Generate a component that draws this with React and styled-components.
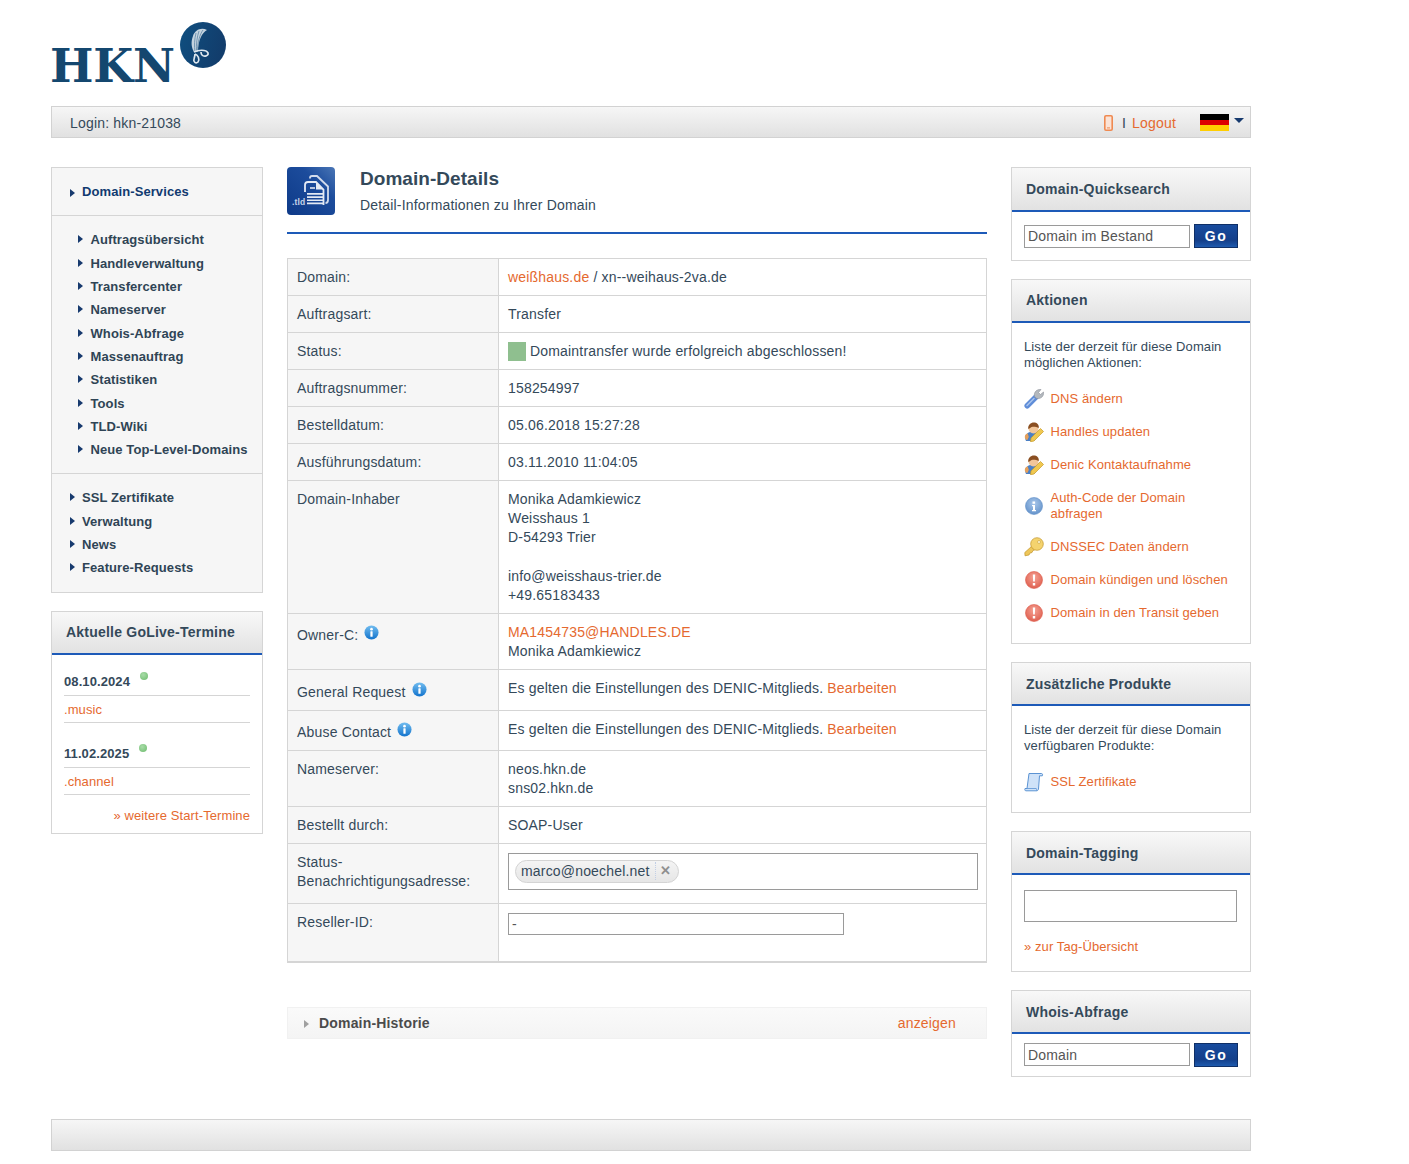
import React from 'react';
import styled, { createGlobalStyle } from 'styled-components';

const GlobalStyle = createGlobalStyle`
  html, body {
    margin: 0;
    padding: 0;
    background: #ffffff;
    font-family: "Liberation Sans", Arial, sans-serif;
    font-size: 14px;
    letter-spacing: 0.18px;
    color: #34495a;
  }
  * { box-sizing: border-box; }
`;

const Page = styled.div`
  width: 1200px;
  margin-left: 51px;
  padding-bottom: 13px;
`;

const LogoRow = styled.header`
  height: 106px;
  display: flex;
  align-items: flex-start;
  gap: 7px;
  padding-top: 22px;
`;

const LogoText = styled.div`
  width: 123px;
  margin: 18px 0 0 -1px;
  font-family: "DejaVu Serif", "Liberation Serif", serif;
  font-weight: 700;
  font-size: 46px;
  line-height: 52px;
  letter-spacing: -0.2px;
  white-space: nowrap;
  color: #14476f;
`;

const GreyBar = styled.div`
  height: 32px;
  border: 1px solid #d2d2d2;
  background: linear-gradient(#f6f6f6, #e1e1e1);
`;

const TopBar = styled(GreyBar)`
  display: flex;
  align-items: center;
  padding: 1px 6px 0 18px;
  line-height: 30px;
`;

const Spacer = styled.div`
  flex: 1;
`;

const Separator = styled.span`
  margin: 0 6px 0 9px;
`;

const A = styled.a`
  color: #e5692f;
  text-decoration: none;
  cursor: pointer;
`;

const FlagWrap = styled.div`
  display: flex;
  align-items: flex-start;
  gap: 5px;
  margin: -1px 0 0 24px;
`;

const Flag = styled.div`
  width: 29px;
  height: 17px;
  background: linear-gradient(#000 0 33.3%, #dd0000 33.3% 66.6%, #ffce00 66.6%);
`;

const Caret = styled.div`
  margin-top: 4px;
  border-left: 5px solid transparent;
  border-right: 5px solid transparent;
  border-top: 5px solid #173a6e;
`;

const Columns = styled.div`
  display: grid;
  grid-template-columns: 212px 700px 240px;
  column-gap: 24px;
  margin-top: 29px;
  align-items: start;
`;

const Stack = styled.aside`
  display: flex;
  flex-direction: column;
  gap: 18px;
`;

const NavBox = styled.nav`
  border: 1px solid #d5d5d5;
  background: #f6f6f6;
`;

const NavSection = styled.ul`
  list-style: none;
  margin: 0;
  padding: ${p => p.$pad || '0'};
  border-bottom: ${p => (p.$last ? 'none' : '1px solid #d5d5d5')};
`;

const NavItem = styled.li`
  position: relative;
  height: ${p => p.$h || '23.33px'};
  line-height: 23px;
  padding-left: ${p => (p.$deep ? '38.5px' : '30px')};
  font-size: 13px;
  letter-spacing: 0.09px;
  font-weight: 700;
  color: ${p => (p.$head ? '#113a70' : '#2f4455')};
  &::before {
    content: '';
    position: absolute;
    left: ${p => (p.$deep ? '26px' : '18px')};
    top: ${p => (p.$head ? '9px' : '7px')};
    border-top: 4px solid transparent;
    border-bottom: 4px solid transparent;
    border-left: 5px solid #173a6e;
  }
`;

const Box = styled.section`
  border: 1px solid #d5d5d5;
  background: #fff;
`;

const BoxHead = styled.h3`
  margin: 0;
  height: ${p => (p.$tall ? '44px' : '43px')};
  padding-left: 14px;
  font-size: 14px;
  letter-spacing: 0.22px;
  line-height: ${p => (p.$tall || p.$low ? '43px' : '41px')};
  font-weight: 700;
  color: #34495a;
  background: linear-gradient(#f8f8f8, #e2e2e2);
  border-bottom: 2px solid #1d5ab8;
`;

const GoLiveBody = styled.div`
  padding: 14px 12px 8px;
  font-size: 13px;
  letter-spacing: 0.09px;
`;

const DateRow = styled.div`
  display: flex;
  align-items: flex-start;
  gap: 10px;
  height: 27px;
  line-height: 25px;
  font-weight: 700;
  margin-top: ${p => (p.$second ? '18px' : '0')};
  border-bottom: 1px solid #d5d5d5;
`;

const Dot = styled.span`
  width: 8px;
  height: 8px;
  margin-top: 3px;
  border-radius: 50%;
  background: radial-gradient(circle at 40% 35%, #a8dca8, #6dbb6d);
`;

const TldRow = styled.div`
  height: 27px;
  line-height: 27px;
  border-bottom: 1px solid #d5d5d5;
`;

const MoreLink = styled(A)`
  display: block;
  text-align: right;
  margin-top: 12px;
  line-height: 18px;
`;

const Main = styled.main`
  min-width: 0;
`;

const TitleRow = styled.div`
  display: flex;
  gap: 25px;
  height: 67px;
  border-bottom: 2px solid #1d5ab8;
`;

const Tile = styled.div`
  width: 48px;
  height: 48px;
`;

const Title = styled.h1`
  margin: 0;
  font-size: 19px;
  letter-spacing: 0.05px;
  line-height: 24px;
  font-weight: 700;
  color: #34495a;
`;

const SubTitle = styled.p`
  margin: 5px 0 0;
  line-height: 19px;
`;

const Table = styled.table`
  width: 700px;
  margin-top: 24px;
  border-collapse: collapse;
  table-layout: fixed;
  border-bottom: 2px solid #d5d5d5;
`;

const Row = styled.tr`
  height: ${p => p.$h}px;
`;

const Label = styled.td`
  width: 211px;
  padding: ${p => p.$top || 9}px 9px ${p => (p.$top ? 6 : 8)}px;
  vertical-align: top;
  line-height: 19px;
  background: #f6f6f6;
  border: 1px solid #d5d5d5;
`;

const Value = styled.td`
  padding: 9px 8px 7px 9px;
  vertical-align: top;
  line-height: 19.2px;
  border: 1px solid #d5d5d5;
`;

const StatusSquare = styled.span`
  display: inline-block;
  width: 18px;
  height: 19px;
  margin-right: 4px;
  vertical-align: top;
  background: #8fbf8f;
`;

const TagField = styled.div`
  height: 37px;
  padding: 6px;
  border: 1px solid #9a9a9a;
`;

const Chip = styled.div`
  display: inline-flex;
  align-items: center;
  height: 23px;
  padding: 0 7px 1px 5px;
  border: 1px solid #d4d4d4;
  border-radius: 12px;
  background: linear-gradient(#f4f4f4, #e6e6e6);
  line-height: 20px;
`;

const ChipClose = styled.span`
  margin-left: 5px;
  padding-left: 4px;
  border-left: 1px dotted #c2cfe6;
  font-size: 13px;
  font-weight: 700;
  line-height: 18px;
  color: #8f8f8f;
`;

const TextInput = styled.input`
  display: block;
  width: ${p => p.$w};
  height: ${p => p.$h || '23px'};
  padding: 0 3px;
  border: 1px solid #9a9a9a;
  border-radius: 0;
  background: #fff;
  outline: none;
  font-family: inherit;
  font-size: 14px;
  letter-spacing: 0.18px;
  color: #555;
`;

const HistoryBar = styled.div`
  display: flex;
  align-items: center;
  height: 32px;
  margin-top: 44px;
  padding: 0 30px 0 16px;
  border: 1px solid #f1f1f1;
  background: linear-gradient(#fafafa, #f4f4f4);
`;

const HistoryTitle = styled.strong`
  color: #4b4b4b;
  &::before {
    content: '';
    display: inline-block;
    margin-right: 10px;
    border-top: 4px solid transparent;
    border-bottom: 4px solid transparent;
    border-left: 5px solid #a0a0a0;
  }
`;

const SearchBody = styled.div`
  display: flex;
  align-items: center;
  gap: 4px;
  padding: ${p => p.$pad || '12px'};
`;

const GoButton = styled.button`
  width: 44px;
  height: 24px;
  padding: 0;
  border: 1px solid #0f2f66;
  background: linear-gradient(#184c9e, #143f8a 70%, #1e5aae);
  color: #fff;
  font-family: inherit;
  font-size: 14px;
  font-weight: 700;
  letter-spacing: 1.5px;
`;

const BoxBody = styled.div`
  padding: ${p => p.$pad};
  font-size: 13px;
  letter-spacing: 0.09px;
  line-height: 16px;
`;

const Intro = styled.p`
  margin: 0 0 11.5px;
`;

const ActionList = styled.ul`
  list-style: none;
  margin: 0;
  padding: 0;
`;

const ActionItem = styled.li`
  display: flex;
  align-items: flex-start;
  gap: 6.5px;
  padding: 8.23px 0;
  line-height: 16.5px;
`;

const IconSlot = styled.span`
  flex: none;
  width: 20px;
  height: 16px;
  margin-top: ${p => p.$top || 0}px;
  & > svg {
    display: block;
    margin-top: -2px;
  }
`;

const TagInput = styled(TextInput)`
  height: 32px;
`;

const TagLink = styled(A)`
  display: block;
  margin-top: 17px;
`;

const Footer = styled(GreyBar)`
  margin-top: 42px;
`;

const InfoBubble = styled.svg`
  width: 15px;
  height: 15px;
  margin-left: 6px;
`;

const InfoIcon = () => (
  <InfoBubble viewBox="0 0 16 16">
    <defs>
      <linearGradient id="infoBlue" x1="0" y1="0" x2="0" y2="1">
        <stop offset="0" stopColor="#72bdf0" />
        <stop offset="1" stopColor="#1273cc" />
      </linearGradient>
    </defs>
    <circle cx="8" cy="8" r="7.5" fill="url(#infoBlue)" />
    <circle cx="8" cy="4.4" r="1.4" fill="#fff" />
    <rect x="6.8" y="6.6" width="2.4" height="6" rx="0.6" fill="#fff" />
  </InfoBubble>
);

const LogoMark = () => (
  <svg width="46" height="46" viewBox="0 0 46 46">
    <defs>
      <linearGradient id="logoBlue" x1="0" y1="0" x2="1" y2="0.3">
        <stop offset="0" stopColor="#0f4f80" />
        <stop offset="1" stopColor="#123d6c" />
      </linearGradient>
    </defs>
    <circle cx="23" cy="23" r="23" fill="url(#logoBlue)" />
    <path d="M13 14C15 8 21 5 27 8 22 11 18 18 18 30L14 30C11 25 11 19 13 14z" fill="#c4d3df" />
    <path d="M16 11C14.500 17 14 24 15 30M19 9C17 15 16 22 16.500 30M23 8C20 12 17.500 20 17.500 30" fill="none" stroke="#5f86a6" strokeWidth="0.800" />
    <path d="M14 30c4-2 12-3 14 1 1 3-4 4-6 2-1-1-1-2-1-3M15 32c3 1 5 5 3 8-2 2-5 0-4-3 .4-2 1-3 1-5" fill="none" stroke="#dfe8ef" strokeWidth="1.700" />
  </svg>
);

const PhoneIcon = () => (
  <svg width="9" height="16" viewBox="0 0 9 16">
    <rect x="0.8" y="0.8" width="7.4" height="14.4" rx="1.2" fill="#fbe3d6" stroke="#ef8a52" strokeWidth="1.6" />
    <rect x="3" y="12.4" width="3" height="1" fill="#ef8a52" />
  </svg>
);

const TileIcon = () => (
  <svg width="48" height="48" viewBox="0 0 48 48">
    <defs>
      <linearGradient id="tileBlue" x1="1" y1="0" x2="0" y2="1">
        <stop offset="0" stopColor="#4a76b6" />
        <stop offset="0.35" stopColor="#1c4c9c" />
        <stop offset="1" stopColor="#0e3a88" />
      </linearGradient>
    </defs>
    <rect width="48" height="48" rx="4" fill="url(#tileBlue)" />
    <path d="M23 11.500v-.500c0-1.200 1-2 2-2h5l11 10.500V33c0 1.500-1 3-2.500 3" fill="none" stroke="#d3dcec" strokeWidth="1.800" />
    <path d="M18 25v-7c0-2 1-3 3-3h8l7.500 7.500V38" fill="none" stroke="#e4eaf4" strokeWidth="1.800" />
    <path d="M29 15v7.500h7.500z" fill="#e4eaf4" />
    <path d="M23 20h5v2h-5z" fill="#b9c6de" />
    <path d="M20 26h16v1.700H20zM20 29.200h16v1.700H20zM20 32.400h16v1.700H20zM20 35.600h16v1.700H20z" fill="#e4eaf4" />
    <text x="5" y="38" fontFamily="Liberation Sans" fontWeight="700" fontSize="8.500" fill="#c8d4e8">.tld</text>
  </svg>
);

const WrenchIcon = () => (
  <svg width="20" height="20" viewBox="0 0 20 20">
    <path d="M3.200 16.800l8.500-8.500" stroke="#5f8dd8" strokeWidth="5.500" strokeLinecap="round" />
    <path d="M3 16.500l7-7" stroke="#a8c4ee" strokeWidth="1.500" strokeLinecap="round" />
    <path d="M10.500 7.500C9.500 3 13 0 17 .5L14.500 3.500 16.500 5.500 19.500 3C20.200 7 17 10.200 12.800 9.500z" fill="#b4b9be" stroke="#8b9198" strokeWidth="0.600" />
  </svg>
);

const UserIcon = () => (
  <svg width="20" height="20" viewBox="0 0 20 20">
    <path d="M2 19c-2-4 0-8 4-9h6l2 4-4 5z" fill="#4c80c4" />
    <path d="M.8 15c0-2 1.500-3.500 3-3.500l1 3.500-1.500 3c-1.500 0-2.500-1.500-2.500-3z" fill="#e6a05a" />
    <circle cx="9.500" cy="6.500" r="5" fill="#f2c69a" />
    <path d="M4.300 7c-.6-4 2.500-6.500 5.500-6.500s5.500 2 5 5.500c-2-1-5.500-1.500-7-1-1 .3-2 1.500-3.500 2z" fill="#8a4f22" />
    <path d="M7 16l9.500-9.500 3 3L10 19l-3.500.8z" fill="#f0c850" stroke="#c69a2a" strokeWidth="0.700" />
  </svg>
);

const RoundIcon = ({ id, from, to, glyph }) => (
  <svg width="20" height="20" viewBox="0 0 20 20">
    <defs>
      <radialGradient id={id} cx="0.5" cy="0.35" r="0.7">
        <stop offset="0" stopColor={from} />
        <stop offset="1" stopColor={to} />
      </radialGradient>
    </defs>
    <circle cx="10" cy="10" r="8.500" fill={`url(#${id})`} stroke={to} strokeWidth="0.600" />
    {glyph === 'info' ? (
      <path d="M8.500 5.500h2.600v2.200H8.500zM8 9h3v5h1v1.200H8V14h1v-3.800H8z" fill="#fff" />
    ) : (
      <path d="M8.800 4.500h2.400l-.4 7H9.200zM8.800 13h2.400v2.400H8.800z" fill="#fff" />
    )}
  </svg>
);

const KeyIcon = () => (
  <svg width="20" height="20" viewBox="0 0 20 20">
    <path d="M.8 15.500L8 9l3.500 3.500-2.500 1-1 2-2 .5-1 2-4 .8z" fill="#eec65a" stroke="#c2952b" strokeWidth="0.700" />
    <circle cx="13" cy="7" r="6.300" fill="#f4d36e" stroke="#c2952b" strokeWidth="0.700" />
    <circle cx="15" cy="5" r="1.500" fill="#fff6d0" stroke="#c2952b" strokeWidth="0.500" />
  </svg>
);

const ScrollIcon = () => (
  <svg width="20" height="20" viewBox="0 0 20 20">
    <path d="M5 1.500h12.500c1 0 1.300 1 .8 2.300h-2.800L14.500 17c-.2 1.200-1 1.800-2 1.800H2c-1 0-1.500-.8-1-2.300h2z" fill="#cfe2f8" stroke="#5b93d3" strokeWidth="1" />
    <path d="M3 16.500h9c.6 0 .8.600.5 2.200" fill="none" stroke="#5b93d3" strokeWidth="0.800" />
  </svg>
);

const alert = <RoundIcon id="alertRed" from="#f5a294" to="#dd5a4a" glyph="alert" />;

const actions = [
  { icon: <WrenchIcon />, label: 'DNS ändern' },
  { icon: <UserIcon />, label: 'Handles updaten' },
  { icon: <UserIcon />, label: 'Denic Kontaktaufnahme' },
  { icon: <RoundIcon id="infoSlate" from="#a8c6ea" to="#5f8fc8" glyph="info" />, label: 'Auth-Code der Domain abfragen', top: 8 },
  { icon: <KeyIcon />, label: 'DNSSEC Daten ändern' },
  { icon: alert, label: 'Domain kündigen und löschen' },
  { icon: alert, label: 'Domain in den Transit geben' },
];

const services = [
  'Auftragsübersicht', 'Handleverwaltung', 'Transfercenter', 'Nameserver', 'Whois-Abfrage',
  'Massenauftrag', 'Statistiken', 'Tools', 'TLD-Wiki', 'Neue Top-Level-Domains',
];

const noop = () => {};

const App = () => (
  <Page>
    <GlobalStyle />
    <LogoRow>
      <LogoText>HKN</LogoText>
      <LogoMark />
    </LogoRow>

    <TopBar>
      <span>Login: hkn-21038</span>
      <Spacer />
      <PhoneIcon />
      <Separator>I</Separator>
      <A>Logout</A>
      <FlagWrap>
        <Flag />
        <Caret />
      </FlagWrap>
    </TopBar>

    <Columns>
      <Stack>
        <NavBox>
          <NavSection $pad="12px 0 11px">
            <NavItem $head $h="24px">Domain-Services</NavItem>
          </NavSection>
          <NavSection $pad="12.33px 0 11.67px">
            {services.map(s => <NavItem $deep key={s}>{s}</NavItem>)}
          </NavSection>
          <NavSection $pad="12px 0 12px" $last>
            {['SSL Zertifikate', 'Verwaltung', 'News', 'Feature-Requests'].map(s => (
              <NavItem key={s}>{s}</NavItem>
            ))}
          </NavSection>
        </NavBox>

        <Box>
          <BoxHead>Aktuelle GoLive-Termine</BoxHead>
          <GoLiveBody>
            <DateRow>08.10.2024 <Dot /></DateRow>
            <TldRow><A>.music</A></TldRow>
            <DateRow $second>11.02.2025 <Dot /></DateRow>
            <TldRow><A>.channel</A></TldRow>
            <MoreLink>» weitere Start-Termine</MoreLink>
          </GoLiveBody>
        </Box>
      </Stack>

      <Main>
        <TitleRow>
          <Tile><TileIcon /></Tile>
          <div>
            <Title>Domain-Details</Title>
            <SubTitle>Detail-Informationen zu Ihrer Domain</SubTitle>
          </div>
        </TitleRow>

        <Table>
          <tbody>
            <Row $h={37}><Label>Domain:</Label><Value><A>weißhaus.de</A> / xn--weihaus-2va.de</Value></Row>
            <Row $h={37}><Label>Auftragsart:</Label><Value>Transfer</Value></Row>
            <Row $h={37}><Label>Status:</Label><Value><StatusSquare />Domaintransfer wurde erfolgreich abgeschlossen!</Value></Row>
            <Row $h={37}><Label>Auftragsnummer:</Label><Value>158254997</Value></Row>
            <Row $h={37}><Label>Bestelldatum:</Label><Value>05.06.2018 15:27:28</Value></Row>
            <Row $h={37}><Label>Ausführungsdatum:</Label><Value>03.11.2010 11:04:05</Value></Row>
            <Row $h={133}>
              <Label>Domain-Inhaber</Label>
              <Value>
                Monika Adamkiewicz<br />Weisshaus 1<br />D-54293 Trier<br /><br />info@weisshaus-trier.de<br />+49.65183433
              </Value>
            </Row>
            <Row $h={56}>
              <Label $top={11}>Owner-C:<InfoIcon /></Label>
              <Value><A>MA1454735@HANDLES.DE</A><br />Monika Adamkiewicz</Value>
            </Row>
            <Row $h={41}>
              <Label $top={12}>General Request<InfoIcon /></Label>
              <Value>Es gelten die Einstellungen des DENIC-Mitglieds. <A>Bearbeiten</A></Value>
            </Row>
            <Row $h={40}>
              <Label $top={11}>Abuse Contact<InfoIcon /></Label>
              <Value>Es gelten die Einstellungen des DENIC-Mitglieds. <A>Bearbeiten</A></Value>
            </Row>
            <Row $h={56}><Label>Nameserver:</Label><Value>neos.hkn.de<br />sns02.hkn.de</Value></Row>
            <Row $h={37}><Label>Bestellt durch:</Label><Value>SOAP-User</Value></Row>
            <Row $h={60}>
              <Label>Status-<br />Benachrichtigungsadresse:</Label>
              <Value>
                <TagField>
                  <Chip>marco@noechel.net<ChipClose>✕</ChipClose></Chip>
                </TagField>
              </Value>
            </Row>
            <Row $h={58}>
              <Label>Reseller-ID:</Label>
              <Value><TextInput $w="336px" $h="22px" value="-" onChange={noop} /></Value>
            </Row>
          </tbody>
        </Table>

        <HistoryBar>
          <HistoryTitle>Domain-Historie</HistoryTitle>
          <Spacer />
          <A>anzeigen</A>
        </HistoryBar>
      </Main>

      <Stack>
        <Box>
          <BoxHead $tall>Domain-Quicksearch</BoxHead>
          <SearchBody>
            <TextInput $w="166px" value="Domain im Bestand" onChange={noop} />
            <GoButton>Go</GoButton>
          </SearchBody>
        </Box>

        <Box>
          <BoxHead>Aktionen</BoxHead>
          <BoxBody $pad="16px 12px 13.3px">
            <Intro>Liste der derzeit für diese Domain möglichen Aktionen:</Intro>
            <ActionList>
              {actions.map(a => (
                <ActionItem key={a.label}>
                  <IconSlot $top={a.top}>{a.icon}</IconSlot>
                  <A>{a.label}</A>
                </ActionItem>
              ))}
            </ActionList>
          </BoxBody>
        </Box>

        <Box>
          <BoxHead $low>Zusätzliche Produkte</BoxHead>
          <BoxBody $pad="16px 12px 13.5px">
            <Intro>Liste der derzeit für diese Domain verfügbaren Produkte:</Intro>
            <ActionList>
              <ActionItem>
                <IconSlot><ScrollIcon /></IconSlot>
                <A>SSL Zertifikate</A>
              </ActionItem>
            </ActionList>
          </BoxBody>
        </Box>

        <Box>
          <BoxHead $low>Domain-Tagging</BoxHead>
          <BoxBody $pad="15px 12px 16px">
            <TagInput $w="213px" />
            <TagLink>» zur Tag-Übersicht</TagLink>
          </BoxBody>
        </Box>

        <Box>
          <BoxHead $low>Whois-Abfrage</BoxHead>
          <SearchBody $pad="9px 12px 9px">
            <TextInput $w="166px" value="Domain" onChange={noop} />
            <GoButton>Go</GoButton>
          </SearchBody>
        </Box>
      </Stack>
    </Columns>

    <Footer />
  </Page>
);

export default App;
